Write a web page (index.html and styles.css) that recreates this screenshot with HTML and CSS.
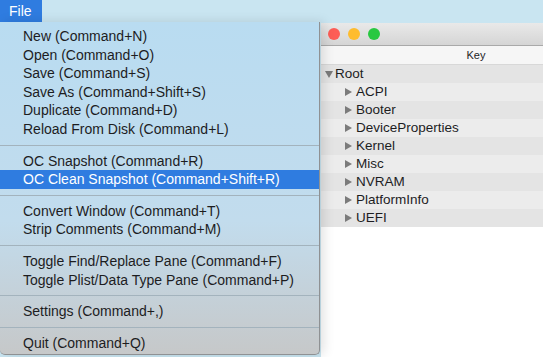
FILE: index.html
```html
<!DOCTYPE html>
<html lang="en">
<head>
  <meta charset="UTF-8">
  <title>ProperTree</title>
  <link rel="stylesheet" href="styles.css">
</head>
<body>
  <div class="menubar">
    <span class="menu-title active">File</span>
  </div>

  <div class="desktop">
    <div class="window">
      <div class="titlebar">
        <span class="light red"></span>
        <span class="light yellow"></span>
        <span class="light green"></span>
      </div>
      <div class="header">Key</div>
      <ul class="tree">
        <li class="row root"><span class="arrow down"></span>Root</li>
        <li class="row child"><span class="arrow"></span>ACPI</li>
        <li class="row child"><span class="arrow"></span>Booter</li>
        <li class="row child"><span class="arrow"></span>DeviceProperties</li>
        <li class="row child"><span class="arrow"></span>Kernel</li>
        <li class="row child"><span class="arrow"></span>Misc</li>
        <li class="row child"><span class="arrow"></span>NVRAM</li>
        <li class="row child"><span class="arrow"></span>PlatformInfo</li>
        <li class="row child"><span class="arrow"></span>UEFI</li>
      </ul>
    </div>
  </div>

  <!-- dropdown sits over the window -->
  <div class="dropdown">
    <div class="item">New (Command+N)</div>
    <div class="item">Open (Command+O)</div>
    <div class="item">Save (Command+S)</div>
    <div class="item">Save As (Command+Shift+S)</div>
    <div class="item">Duplicate (Command+D)</div>
    <div class="item">Reload From Disk (Command+L)</div>
    <div class="sep"></div>
    <div class="item">OC Snapshot (Command+R)</div>
    <div class="item selected">OC Clean Snapshot (Command+Shift+R)</div>
    <div class="sep"></div>
    <div class="item">Convert Window (Command+T)</div>
    <div class="item">Strip Comments (Command+M)</div>
    <div class="sep"></div>
    <div class="item">Toggle Find/Replace Pane (Command+F)</div>
    <div class="item">Toggle Plist/Data Type Pane (Command+P)</div>
    <div class="sep"></div>
    <div class="item">Settings (Command+,)</div>
    <div class="sep"></div>
    <div class="item">Quit (Command+Q)</div>
  </div>
</body>
</html>
```

FILE: styles.css
```css
html, body {
  height: 100%;
}
body {
  margin: 0;
  font-family: "Liberation Sans", Arial, sans-serif;
  font-size: 13px;
  background-color: #6d6760;
  overflow: hidden;
  position: relative;
}
.menubar {
  height: 22px;
  background: #c9e5f1;
  display: flex;
  align-items: stretch;
}
.menu-title {
  padding: 0 10px 0 9px;
  display: flex;
  align-items: center;
  font-size: 14px;
  color: #1d1d1f;
}
.menu-title.active {
  background: #2f7ce0;
  color: #fff;
}
.desktop {
  height: calc(100% - 22px);
  display: flex;
  background: #c9e5f1;
}
.window {
  margin: 1px 0 0 321px;
  flex: 1;
  background: #fff;
  display: flex;
  flex-direction: column;
}
.titlebar {
  height: 22px;
  background: linear-gradient(#e9e9e9, #d5d5d5);
  border-bottom: 1px solid #a9a9a9;
  display: flex;
  align-items: center;
  gap: 8px;
  padding-left: 7px;
}
.light {
  width: 12px;
  height: 12px;
  border-radius: 50%;
}
.light.red { background: #fd5d56; }
.light.yellow { background: #febc2e; }
.light.green { background: #28c840; }
.header {
  height: 18px;
  line-height: 18px;
  background: #f6f6f6;
  border-bottom: 1px solid #d8d8d8;
  text-align: center;
  font-size: 11px;
  color: #1d1d1f;
  padding-left: 88px;
}
.tree {
  list-style: none;
  margin: 0;
  padding: 0;
}
.row {
  height: 18px;
  line-height: 18px;
  font-size: 13.5px;
  background: #e4e4e4;
  color: #1d1d1f;
  display: flex;
  align-items: center;
}
.row:nth-child(even) {
  background: #ececec;
}
.arrow {
  width: 0;
  height: 0;
  border-top: 4px solid transparent;
  border-bottom: 4px solid transparent;
  border-left: 7px solid #7b7b7b;
  margin-right: 4px;
}
.arrow.down {
  border-left: 4px solid transparent;
  border-right: 4px solid transparent;
  border-top: 7px solid #7b7b7b;
  border-bottom: 0;
  margin-right: 2px;
}
.root {
  padding-left: 4px;
}
.child {
  padding-left: 24px;
}
.dropdown {
  position: absolute;
  left: 0;
  top: 22px;
  width: 320px;
  height: 333px;
  padding-top: 5px;
  box-sizing: border-box;
  background: linear-gradient(#b9dcf1, #c2dced 60%, #c6c8c9);
  border-right: 1px solid #8f9193;
  border-bottom: 1px solid #8f9193;
  border-radius: 0 0 5px 5px;
  box-shadow: 4px 0 12px rgba(0, 0, 0, 0.12);
}
.item {
  height: 18.6px;
  line-height: 18.6px;
  padding-left: 23px;
  font-size: 14px;
  color: #1d1d1f;
  white-space: nowrap;
}
.item.selected {
  background: #2f7ce0;
  color: #fff;
}
.sep {
  height: 1px;
  margin: 6px 0;
  background: #a3b3bd;
}
```
